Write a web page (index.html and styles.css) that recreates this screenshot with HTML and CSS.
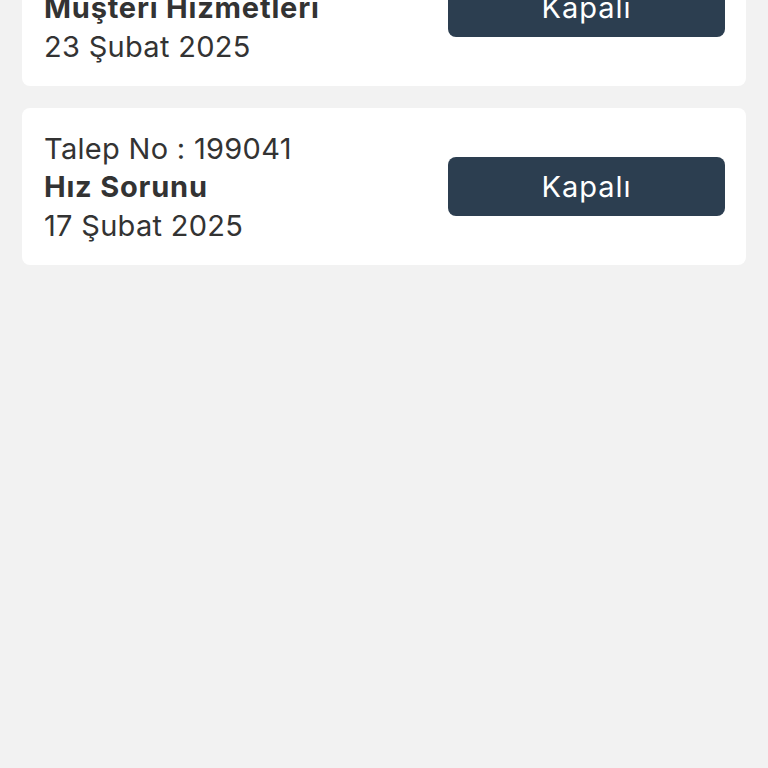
FILE: index.html
```html
<!DOCTYPE html>
<html lang="tr">
<head>
<meta charset="utf-8">
<link rel="stylesheet" href="styles.css">
</head>
<body>
<div class="list">
  <div class="card">
    <div class="info">
      <div class="line">Talep No : 199512</div>
      <div class="line title">Muşteri Hizmetleri</div>
      <div class="line">23 Şubat 2025</div>
    </div>
    <div class="status">Kapalı</div>
  </div>
  <div class="card">
    <div class="info">
      <div class="line">Talep No : 199041</div>
      <div class="line title">Hız Sorunu</div>
      <div class="line">17 Şubat 2025</div>
    </div>
    <div class="status">Kapalı</div>
  </div>
</div>
</body>
</html>
```
FILE: styles.css
```css
html, body {
  margin: 0;
  padding: 0;
  background: #f2f2f2;
  height: 100%;
}
body {
  font-family: "Inter", "Lato", sans-serif;
  color: #333333;
  overflow: hidden;
}
.list {
  display: flex;
  flex-direction: column;
  gap: 22px;
  padding: 0 22px;
  margin-top: -71px;
}
.card {
  background: #ffffff;
  border-radius: 8px;
  height: 157px;
  box-sizing: border-box;
  padding: 0 21px 0 22px;
  display: flex;
  align-items: center;
  justify-content: space-between;
}
.info {
  display: flex;
  flex-direction: column;
  padding-top: 2px;
}
.line {
  font-size: 29px;
  line-height: 38.5px;
  letter-spacing: 0.3px;
  white-space: nowrap;
}
.title {
  font-weight: 700;
  letter-spacing: 0.8px;
}
.status {
  width: 277px;
  height: 59px;
  border-radius: 8px;
  background: #2c3e50;
  color: #ffffff;
  font-size: 29px;
  letter-spacing: 1px;
  display: flex;
  align-items: center;
  justify-content: center;
}
```
